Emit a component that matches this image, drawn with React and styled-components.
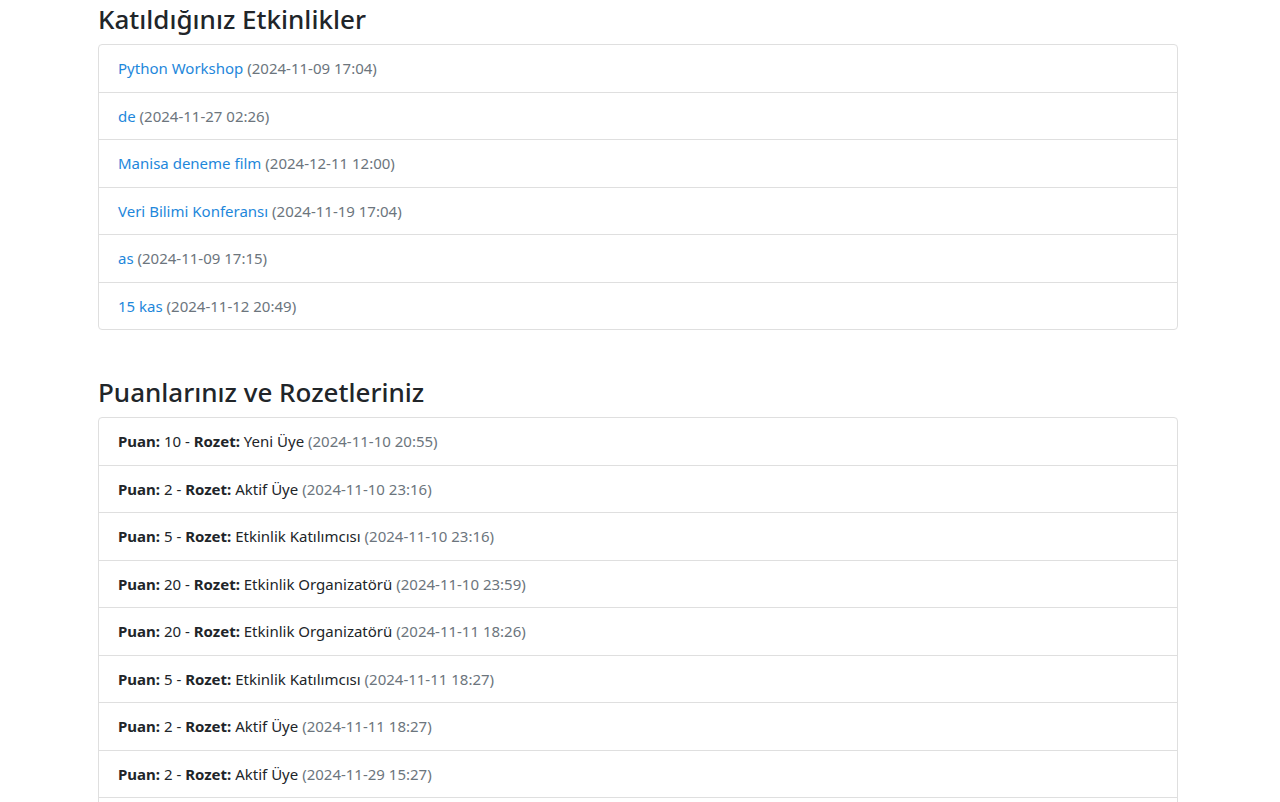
import React from "react";
import styled, { createGlobalStyle } from "styled-components";

const GlobalStyle = createGlobalStyle`
  body {
    margin: 0;
    background: #fff;
    font-family: "Noto Sans", "Open Sans", Arial, sans-serif;
    color: #212529;
  }
`;

const Page = styled.div`
  width: 1080px;
  margin: 0 0 0 98px;
  padding-top: 3px;
`;

const Section = styled.section`
  & + & {
    margin-top: 46px;
  }
`;

const Title = styled.h3`
  margin: 0 0 8px;
  font-size: 26px;
  font-weight: 500;
  line-height: 33px;
  color: #212529;
`;

const List = styled.ul`
  list-style: none;
  margin: 0;
  padding: 0;
  border: 1px solid #dfdfdf;
  border-radius: 4px;
`;

const Item = styled.li`
  padding: 12px 19px;
  font-size: 15px;
  line-height: 22.5px;
  color: #212529;
  & + & {
    border-top: 1px solid #dfdfdf;
  }
`;

const Link = styled.a`
  color: #1e87db;
  text-decoration: none;
`;

const Muted = styled.span`
  color: #6c757d;
`;

const events = [
  ["Python Workshop", "2024-11-09 17:04"],
  ["de", "2024-11-27 02:26"],
  ["Manisa deneme film", "2024-12-11 12:00"],
  ["Veri Bilimi Konferansı", "2024-11-19 17:04"],
  ["as", "2024-11-09 17:15"],
  ["15 kas", "2024-11-12 20:49"],
];

const badges = [
  [10, "Yeni Üye", "2024-11-10 20:55"],
  [2, "Aktif Üye", "2024-11-10 23:16"],
  [5, "Etkinlik Katılımcısı", "2024-11-10 23:16"],
  [20, "Etkinlik Organizatörü", "2024-11-10 23:59"],
  [20, "Etkinlik Organizatörü", "2024-11-11 18:26"],
  [5, "Etkinlik Katılımcısı", "2024-11-11 18:27"],
  [2, "Aktif Üye", "2024-11-11 18:27"],
  [2, "Aktif Üye", "2024-11-29 15:27"],
  [5, "Etkinlik Katılımcısı", "2024-11-29 15:30"],
];

export default function App() {
  return (
    <>
      <GlobalStyle />
      <Page>
        <Section>
          <Title>Katıldığınız Etkinlikler</Title>
          <List>
            {events.map(([name, date], i) => (
              <Item key={i}>
                <Link href="#">{name}</Link> <Muted>({date})</Muted>
              </Item>
            ))}
          </List>
        </Section>
        <Section>
          <Title>Puanlarınız ve Rozetleriniz</Title>
          <List>
            {badges.map(([puan, rozet, date], i) => (
              <Item key={i}>
                <strong>Puan:</strong> {puan} - <strong>Rozet:</strong> {rozet}{" "}
                <Muted>({date})</Muted>
              </Item>
            ))}
          </List>
        </Section>
      </Page>
    </>
  );
}
